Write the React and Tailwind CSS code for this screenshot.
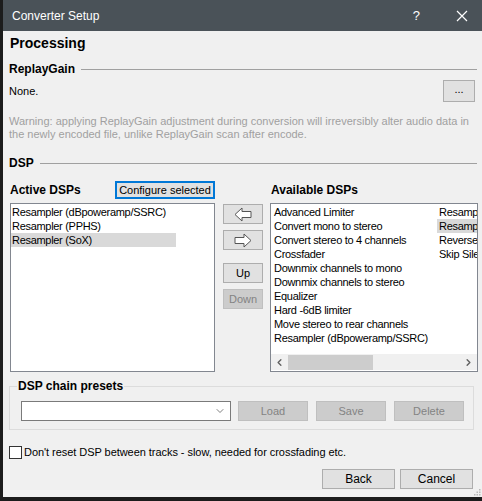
import { ChevronDown, ChevronLeft, ChevronRight } from 'lucide-react';

const activeDsps = ['Resampler (dBpoweramp/SSRC)', 'Resampler (PPHS)', 'Resampler (SoX)'];

const availableDsps = [
  'Advanced Limiter',
  'Convert mono to stereo',
  'Convert stereo to 4 channels',
  'Crossfader',
  'Downmix channels to mono',
  'Downmix channels to stereo',
  'Equalizer',
  'Hard -6dB limiter',
  'Move stereo to rear channels',
  'Resampler (dBpoweramp/SSRC)',
];

const availableDsps2 = ['Resampler (PPHS)', 'Resampler (SoX)', 'Reverse', 'Skip Silence'];

function Arrow({ flip }) {
  return (
    <svg width="18" height="15" viewBox="0 0 18 15" className={flip ? 'scale-x-[-1]' : ''}>
      <polygon
        points="1,7.5 8,1 8,4.5 17,4.5 17,10.5 8,10.5 8,14"
        fill="#ffffff"
        stroke="#555555"
        strokeWidth="1"
        strokeLinejoin="miter"
      />
    </svg>
  );
}

function SectionHeader({ title }) {
  return (
    <div className="flex items-center h-[20px] pl-[6px] pr-[5px]">
      <span className="text-[12px] font-bold text-black">{title}</span>
      <div className="flex-1 h-px bg-[#a0a0a0] ml-[6px]"></div>
    </div>
  );
}

export default function App() {
  return (
    <div
      className="w-[482px] h-[501px] bg-[#1c1c1c] overflow-hidden"
      style={{ fontFamily: '"Liberation Sans", Arial, sans-serif' }}
    >
      <div className="ml-[3px] w-[479px] h-[497px] bg-[#f0f0f0] flex flex-col">
        {/* Title bar */}
        <div className="h-[31px] bg-[#4a5258] flex items-center text-white">
          <span className="pl-[9px] text-[12px] flex-1">Converter Setup</span>
          <span className="text-[13px] mr-[36px]">?</span>
          <svg width="12" height="12" viewBox="0 0 12 12" className="mr-[14px]">
            <path d="M1 1 L11 11 M11 1 L1 11" stroke="#ffffff" strokeWidth="1.2" />
          </svg>
        </div>

        <div className="h-[24px] flex items-center pl-[7px]">
          <span className="text-[14px] font-bold text-black">Processing</span>
        </div>

        {/* ReplayGain */}
        <div className="mt-[4px]">
          <SectionHeader title="ReplayGain" />
        </div>
        <div className="mt-[1px] h-[22px] flex items-center justify-between pl-[6px] pr-[7px]">
          <span className="text-[11px] text-black">None.</span>
          <button className="w-[32px] h-[22px] bg-[#e1e1e1] border border-[#adadad] text-[11px] text-black leading-none pb-[4px]">
            ...
          </button>
        </div>
        <p className="mt-[13px] pl-[6px] text-[11px] leading-[13px] text-[#a0a0a0] whitespace-nowrap">
          Warning: applying ReplayGain adjustment during conversion will irreversibly alter audio data in
          <br />
          the newly encoded file, unlike ReplayGain scan after encode.
        </p>

        {/* DSP */}
        <div className="mt-[12px]">
          <SectionHeader title="DSP" />
        </div>

        <div className="mt-[8px] flex pl-[7px]">
          {/* Active column */}
          <div className="w-[205px] flex flex-col">
            <div className="h-[18px] flex items-center justify-between">
              <span className="text-[12px] font-bold text-black">Active DSPs</span>
              <button className="w-[100px] h-[18px] bg-[#e1e1e1] border-2 border-[#0078d7] text-[11px] text-black leading-none">
                Configure selected
              </button>
            </div>
            <div className="mt-[4px] h-[169px] bg-white border border-[#828790] pt-[1px] text-[11px] tracking-[-0.3px] text-black">
              {activeDsps.map((d, i) => (
                <div
                  key={d}
                  className={`h-[14px] leading-[14px] pl-[1px] w-[165px] ${i === 2 ? 'bg-[#d9d9d9]' : ''}`}
                >
                  {d}
                </div>
              ))}
            </div>
          </div>

          {/* Move buttons */}
          <div className="w-[40px] ml-[8px] pt-[23px] flex flex-col">
            <button className="h-[20px] bg-[#e1e1e1] border border-[#adadad] flex items-center justify-center">
              <Arrow />
            </button>
            <button className="mt-[6px] h-[20px] bg-[#e1e1e1] border border-[#adadad] flex items-center justify-center">
              <Arrow flip />
            </button>
            <button className="mt-[13px] h-[20px] bg-[#e1e1e1] border border-[#adadad] text-[11px] text-black">
              Up
            </button>
            <button className="mt-[6px] h-[20px] bg-[#cccccc] border border-[#bfbfbf] text-[11px] text-[#838383]">
              Down
            </button>
          </div>

          {/* Available column */}
          <div className="w-[208px] ml-[7px] flex flex-col">
            <div className="h-[18px] flex items-center pl-[1px]">
              <span className="text-[12px] font-bold text-black">Available DSPs</span>
            </div>
            <div className="mt-[4px] h-[169px] bg-white border border-[#828790] flex flex-col text-[11px] tracking-[-0.3px] text-black">
              <div className="flex-1 flex overflow-hidden pt-[1px]">
                <div className="w-[166px] shrink-0 pl-[3px]">
                  {availableDsps.map((d) => (
                    <div key={d} className="h-[14px] leading-[14px] whitespace-nowrap">
                      {d}
                    </div>
                  ))}
                </div>
                <div className="shrink-0 w-[100px]">
                  {availableDsps2.map((d, i) => (
                    <div
                      key={d}
                      className={`h-[14px] leading-[14px] pl-[2px] whitespace-nowrap ${i === 1 ? 'bg-[#d9d9d9]' : ''}`}
                    >
                      {d}
                    </div>
                  ))}
                </div>
              </div>
              <div className="h-[16px] mb-[1px] bg-[#f0f0f0] flex items-center">
                <div className="w-[17px] flex justify-center text-[#606060]">
                  <ChevronLeft size={11} strokeWidth={3} />
                </div>
                <div className="w-[85px] h-[15px] bg-[#cdcdcd]"></div>
                <div className="flex-1"></div>
                <div className="w-[17px] flex justify-center text-[#606060]">
                  <ChevronRight size={11} strokeWidth={3} />
                </div>
              </div>
            </div>
          </div>
        </div>

        {/* DSP chain presets */}
        <fieldset className="mt-[7px] ml-[6px] w-[465px] border border-[#dcdcdc] pb-[8px]">
          <legend className="ml-[7px] px-[1px] text-[12px] leading-[14px] font-bold text-black">
            DSP chain presets
          </legend>
          <div className="mt-[8px] pl-[11px] flex items-center">
            <div className="w-[210px] h-[20px] bg-white border border-[#7a7a7a] flex items-center justify-end pr-[4px] text-[#555]">
              <ChevronDown size={12} strokeWidth={1.5} />
            </div>
            <button className="ml-[7px] w-[70px] h-[20px] bg-[#cccccc] border border-[#bfbfbf] text-[11px] text-[#838383]">
              Load
            </button>
            <button className="ml-[8px] w-[70px] h-[20px] bg-[#cccccc] border border-[#bfbfbf] text-[11px] text-[#838383]">
              Save
            </button>
            <button className="ml-[8px] w-[70px] h-[20px] bg-[#cccccc] border border-[#bfbfbf] text-[11px] text-[#838383]">
              Delete
            </button>
          </div>
        </fieldset>

        {/* Checkbox */}
        <label className="mt-[16px] pl-[6px] h-[13px] flex items-center">
          <span className="w-[13px] h-[13px] bg-white border border-[#333333]"></span>
          <span className="ml-[2px] text-[11px] text-black tracking-[-0.05px]">
            Don't reset DSP between tracks - slow, needed for crossfading etc.
          </span>
        </label>

        {/* Bottom buttons */}
        <div className="mt-[10px] flex justify-end pr-[9px]">
          <button className="w-[73px] h-[20px] bg-[#e1e1e1] border border-[#adadad] text-[12px] text-black">
            Back
          </button>
          <button className="ml-[5px] w-[73px] h-[20px] bg-[#e1e1e1] border border-[#adadad] text-[12px] text-black">
            Cancel
          </button>
        </div>
        <div className="flex-1 flex items-end justify-end pr-[1px] pb-[1px]">
          <svg width="7" height="7" viewBox="0 0 7 7">
            <rect x="5" y="0" width="1.5" height="1.5" fill="#b8b8b8" />
            <rect x="2.5" y="2.5" width="1.5" height="1.5" fill="#b8b8b8" />
            <rect x="5" y="2.5" width="1.5" height="1.5" fill="#b8b8b8" />
            <rect x="0" y="5" width="1.5" height="1.5" fill="#b8b8b8" />
            <rect x="2.5" y="5" width="1.5" height="1.5" fill="#b8b8b8" />
            <rect x="5" y="5" width="1.5" height="1.5" fill="#b8b8b8" />
          </svg>
        </div>
      </div>
    </div>
  );
}
